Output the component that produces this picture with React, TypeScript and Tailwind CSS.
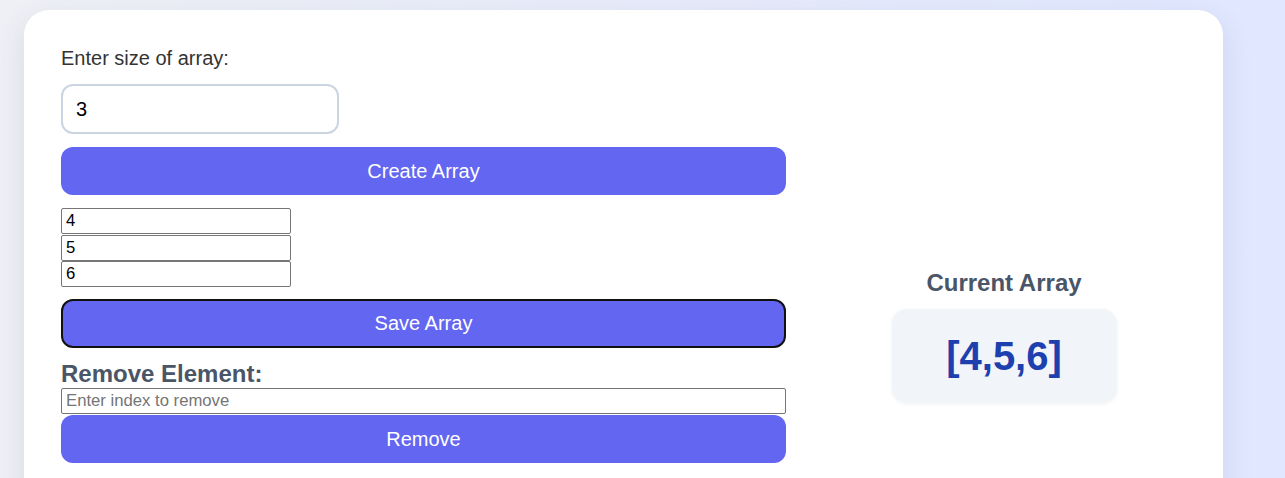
import { useState } from 'react'

const App = () => {
  const [size, setSize] = useState('3')
  const [values, setValues] = useState(['4', '5', '6'])
  const [index, setIndex] = useState('')

  const updateValue = (i: number, v: string) => {
    const next = [...values]
    next[i] = v
    setValues(next)
  }

  return (
    <div
      className="min-h-screen bg-gradient-to-r from-[#eff0f5] to-[#e0e7ff] pt-[10px] pl-[24px]"
      style={{ fontFamily: '"Liberation Sans", Arial, sans-serif' }}
    >
      <div className="w-[1199px] min-h-[600px] rounded-[25px] bg-white p-[37px] shadow-[0_10px_30px_rgba(60,70,120,0.12)]">
        <div className="flex gap-[36px]">
          {/* left: form */}
          <div className="w-[725px] flex flex-col">
            <label className="text-[20px] leading-[23px] text-[#333]">Enter size of array:</label>
            <input
              type="number"
              value={size}
              onChange={(e) => setSize(e.target.value)}
              className="mt-[14px] w-[278px] h-[50px] rounded-[12px] border-2 border-[#cbd5e1] px-[13px] text-[20px] text-black outline-none"
            />
            <button className="mt-[13px] h-[48px] rounded-[12px] bg-[#6366f1] text-[20px] text-white">
              Create Array
            </button>

            <div className="mt-[13px] flex flex-col gap-[0.5px]">
              {values.map((v, i) => (
                <input
                  key={i}
                  type="text"
                  value={v}
                  onChange={(e) => updateValue(i, e.target.value)}
                  className="w-[230px] h-[26px] rounded-[2px] border border-[#767676] px-[4px] text-[16.7px] text-black outline-none"
                />
              ))}
            </div>

            <button className="mt-[12px] h-[49px] pb-[1px] rounded-[12px] border-2 border-[#111] bg-[#6366f1] text-[20px] text-white">
              Save Array
            </button>

            <h3 className="mt-[12px] mb-[1px] text-[24px] leading-[27px] font-bold text-[#4a5568]">Remove Element:</h3>
            <input
              type="text"
              placeholder="Enter index to remove"
              value={index}
              onChange={(e) => setIndex(e.target.value)}
              className="h-[26px] rounded-[2px] border border-[#767676] px-[4px] text-[16.7px] text-black placeholder:text-[#757575] outline-none"
            />
            <button className="mt-[1px] h-[48px] pb-[1px] rounded-[12px] bg-[#6366f1] text-[20px] text-white">
              Remove
            </button>
          </div>

          {/* right: current array */}
          <div className="flex-1 flex flex-col items-center pt-[222px]">
            <h3 className="text-[24px] leading-[27px] font-bold text-[#4a5568]">Current Array</h3>
            <div className="mt-[13px] w-[225px] h-[94px] flex items-center justify-center rounded-[15px] bg-[#f1f4f9] shadow-[0_1px_4px_rgba(0,0,0,0.06)]">
              <span className="text-[40px] font-bold text-[#1e40af]">[{values.join(',')}]</span>
            </div>
          </div>
        </div>
      </div>
    </div>
  )
}

export default App
